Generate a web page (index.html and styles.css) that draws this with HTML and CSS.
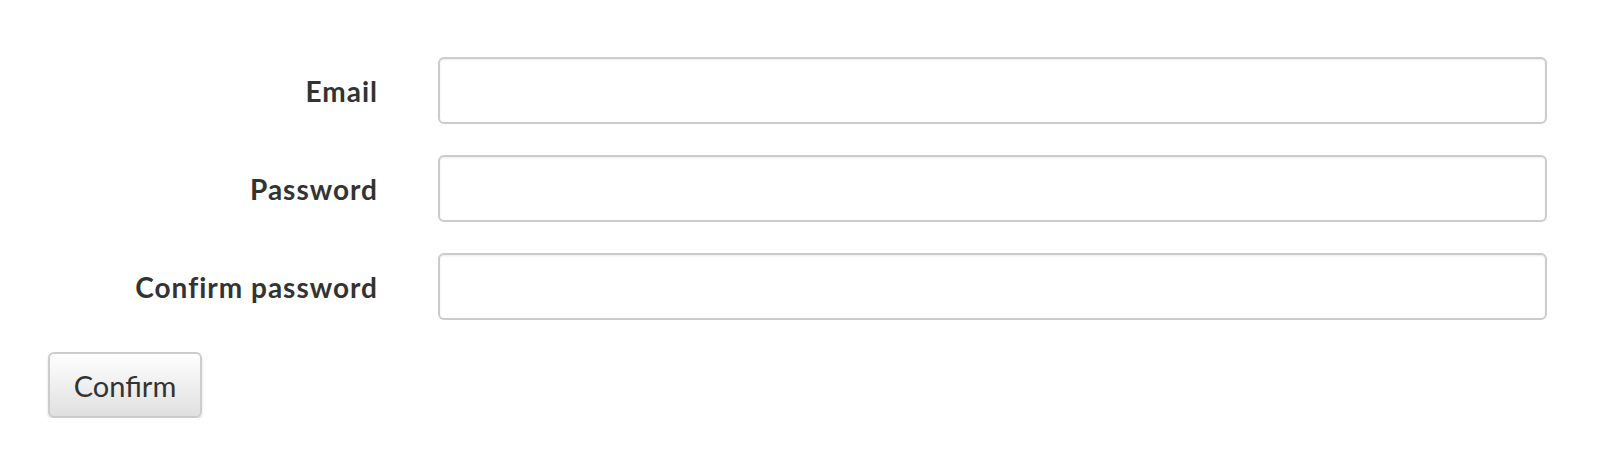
FILE: index.html
```html
<!DOCTYPE html>
<html lang="en">
<head>
    <meta charset="UTF-8">
    <meta name="viewport" content="width=device-width, initial-scale=1.0">
    <title>Register</title>
    <link rel="stylesheet" href="styles.css">
</head>
<body>
    <form class="register-form">
        <div class="form-row">
            <label for="email">Email</label>
            <input type="email" id="email" class="field">
        </div>
        <div class="form-row">
            <label for="password">Password</label>
            <input type="password" id="password" class="field">
        </div>
        <div class="form-row">
            <label for="confirm">Confirm password</label>
            <input type="password" id="confirm" class="field">
        </div>
        <button type="button" class="confirm-button">Confirm</button>
    </form>
</body>
</html>
```

FILE: styles.css
```css
body {
    font-family: Lato, "Open Sans", sans-serif;
    margin: 0;
    padding: 0;
    background-color: #ffffff;
    color: #333333;
}
.register-form {
    padding: 57px 69px 0 48px;
}
.form-row {
    display: grid;
    grid-template-columns: 330px 1fr;
    column-gap: 60px;
    align-items: center;
    margin-bottom: 31px;
}
.form-row label {
    text-align: right;
    font-weight: 700;
    font-size: 28px;
    letter-spacing: 1px;
}
.field {
    box-sizing: border-box;
    height: 67px;
    border: 2px solid #cccccc;
    border-radius: 6px;
    box-shadow: inset 0 1px 2px rgba(0, 0, 0, 0.08);
    background-color: #ffffff;
    font-size: 28px;
    padding: 0 18px;
}
.confirm-button {
    box-sizing: border-box;
    width: 154px;
    height: 66px;
    margin-top: 1px;
    font-family: Lato, "Open Sans", sans-serif;
    font-size: 29px;
    color: #333333;
    border: 2px solid #cccccc;
    border-radius: 6px;
    background: linear-gradient(#ffffff, #e0e0e0);
    box-shadow: 0 2px 3px rgba(0, 0, 0, 0.12);
    cursor: pointer;
}
```
